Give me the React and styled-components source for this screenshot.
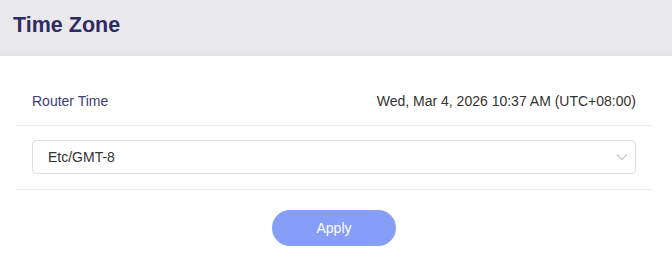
import React from "react";
import styled, { createGlobalStyle } from "styled-components";

export default function App() {
  return (
    <>
      <GlobalStyle />
      <Header>
        <Title>Time Zone</Title>
      </Header>
      <Content>
        <InfoRow>
          <Label>Router Time</Label>
          <Value>Wed, Mar 4, 2026 10:37 AM (UTC+08:00)</Value>
        </InfoRow>
        <SelectRow>
          <SelectBox>
            <span>Etc/GMT-8</span>
            <svg width="12" height="8" viewBox="0 0 12 8">
              <path d="M1 1.5 L6 6.5 L11 1.5" fill="none" stroke="#c0c4cc" strokeWidth="1.1" />
            </svg>
          </SelectBox>
        </SelectRow>
        <Actions>
          <ApplyButton type="button">Apply</ApplyButton>
        </Actions>
      </Content>
    </>
  );
}

const GlobalStyle = createGlobalStyle`
body {
  margin: 0;
  background: #fff;
  font-family: "Liberation Sans", Arial, sans-serif;
}
`;

const Header = styled.div`
  height: 56px;
  display: flex;
  align-items: center;
  padding: 0 13px 6px;
  box-sizing: border-box;
  background: linear-gradient(to bottom, #eae9ee 0%, #e9e8ed 88%, #e2e1e6 100%);
`;

const Title = styled.h1`
  margin: 0;
  font-size: 21.5px;
  font-weight: 700;
  color: #2f2c61;
`;

const Content = styled.div`
  padding: 20px 20px 0 16px;
`;

const InfoRow = styled.div`
  display: flex;
  justify-content: space-between;
  align-items: center;
  height: 49px;
  padding: 0 16px;
  border-bottom: 1px solid #ebebeb;
  font-size: 14px;
`;

const Label = styled.span`
  color: #403e72;
`;

const Value = styled.span`
  color: #333;
`;

const SelectRow = styled.div`
  padding: 14px 16px 15px;
  border-bottom: 1px solid #ebebeb;
`;

const SelectBox = styled.div`
  height: 34px;
  box-sizing: border-box;
  border: 1px solid #dcdfe6;
  border-radius: 4px;
  display: flex;
  align-items: center;
  justify-content: space-between;
  padding: 0 7px 0 15px;
  font-size: 14px;
  color: #333;
`;

const Actions = styled.div`
  display: flex;
  justify-content: center;
  padding-top: 20px;
`;

const ApplyButton = styled.button`
  width: 124px;
  height: 36px;
  border: none;
  border-radius: 18px;
  background: #879ef8;
  color: #fff;
  font-family: "Liberation Sans", Arial, sans-serif;
  font-size: 14px;
  cursor: pointer;
`;
